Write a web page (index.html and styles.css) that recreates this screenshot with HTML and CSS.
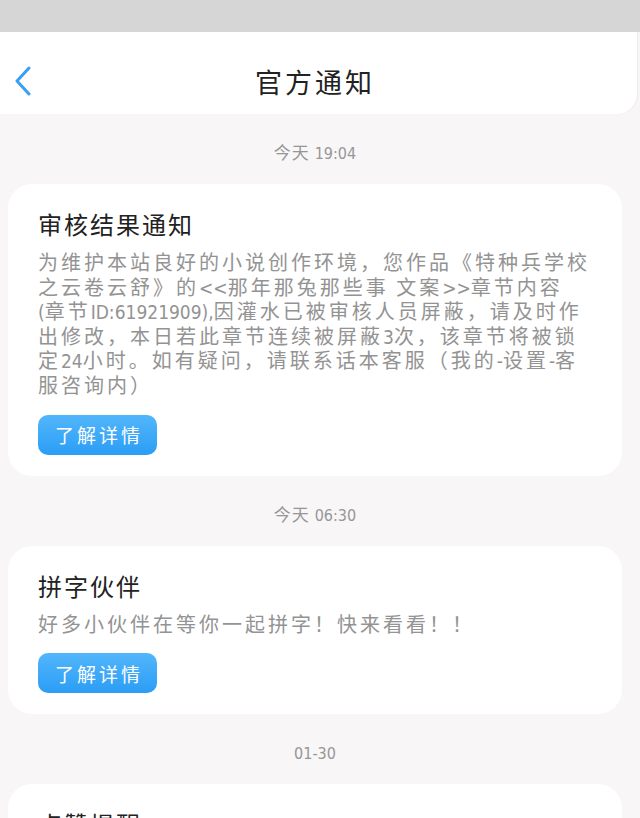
FILE: index.html
```html
<!DOCTYPE html>
<html lang="zh">
<head>
<meta charset="utf-8">
<title>官方通知</title>
<link rel="stylesheet" href="styles.css">
</head>
<body>
<div class="statusbar"></div>
<header class="header">
  <div class="back">
    <svg width="18" height="30" viewBox="0 0 18 30"><path d="M15 2 L3 15 L15 28" fill="none" stroke="#3a9ff0" stroke-width="3" stroke-linecap="round" stroke-linejoin="round"/></svg>
  </div>
  <h1 class="title">官方通知</h1>
</header>
<main class="list">
  <div class="time">今天 <span class="num">19:04</span></div>
  <section class="card">
    <h2 class="card-title">审核结果通知</h2>
    <p class="card-body">为维护本站良好的小说创作环境，您作品《特种兵学校<br>之云卷云舒》的<span class="lt">&lt;&lt;</span>那年那兔那些事 文案<span class="lt">&gt;&gt;</span>章节内容<br><span class="lt">(</span>章节<span class="lt">ID:61921909),</span>因灌水已被审核人员屏蔽，请及时作<br>出修改，本日若此章节连续被屏蔽<span class="lt">3</span>次，该章节将被锁<br>定<span class="lt">24</span>小时。如有疑问，请联系话本客服（我的<span class="lt">-</span>设置<span class="lt">-</span>客<br>服咨询内）</p>
    <a class="btn">了解详情</a>
  </section>
  <div class="time">今天 <span class="num">06:30</span></div>
  <section class="card">
    <h2 class="card-title">拼字伙伴</h2>
    <p class="card-body">好多小伙伴在等你一起拼字！快来看看！！</p>
    <a class="btn">了解详情</a>
  </section>
  <div class="time"><span class="num">01-30</span></div>
  <section class="card">
    <h2 class="card-title">点赞提醒</h2>
    <p class="card-body">有人赞了你的作品，快去看看吧！</p>
  </section>
</main>
</body>
</html>
```
FILE: styles.css
```css
html, body {
  margin: 0;
  padding: 0;
}
body {
  background: #f8f6f7;
  font-family: "Noto Sans CJK SC", "Noto Sans", sans-serif;
  width: 640px;
  height: 818px;
  overflow: hidden;
}
.statusbar {
  height: 32px;
  background: #d6d6d6;
}
.header {
  width: 637px;
  height: 82px;
  background: #fff;
  border-bottom-right-radius: 20px;
  box-shadow: 1px 0 1px rgba(0,0,0,0.05);
  display: flex;
  align-items: center;
  position: relative;
  box-sizing: border-box;
  padding-right: 7px;
}
.back {
  position: absolute;
  left: 14px;
  top: 34px;
  width: 18px;
  height: 30px;
}
.back svg { display: block; }
.title {
  flex: 1;
  margin: 0;
  text-align: center;
  font-size: 27px;
  font-weight: 400;
  letter-spacing: 3px;
  color: #222;
  line-height: 36px;
  padding-top: 18px;
}
.list {
  width: 630px;
}
.time {
  padding: 27px 0 19px;
  line-height: 22px;
  font-size: 17px;
  color: #969696;
  text-align: center;
  letter-spacing: 1px;
}
.num {
  font-family: "DejaVu Sans", sans-serif;
  font-stretch: condensed;
  letter-spacing: 0;
  font-size: 16px;
}
.card {
  margin: 0 8px;
  background: #fff;
  border-radius: 24px;
  padding: 24px 30px 21px;
}
.card-title {
  margin: 0;
  font-size: 24px;
  font-weight: 400;
  line-height: 32px;
  letter-spacing: 2px;
  color: #222;
}
.card-body {
  margin: 10px 0 0;
  font-size: 20px;
  line-height: 24.6px;
  letter-spacing: 3px;
  color: #939393;
  white-space: nowrap;
}
.lt {
  letter-spacing: 0;
  font-family: "DejaVu Sans", sans-serif;
  font-stretch: condensed;
  font-size: 19px;
  line-height: 16px;
}
.btn {
  display: flex;
  align-items: center;
  justify-content: center;
  margin-top: 17px;
  width: 119px;
  height: 40px;
  border-radius: 10px;
  background: linear-gradient(#52b6fb, #2b9df5);
  color: #fff;
  font-size: 19px;
  letter-spacing: 3px;
  padding-left: 3px;
  box-sizing: border-box;
}
```
